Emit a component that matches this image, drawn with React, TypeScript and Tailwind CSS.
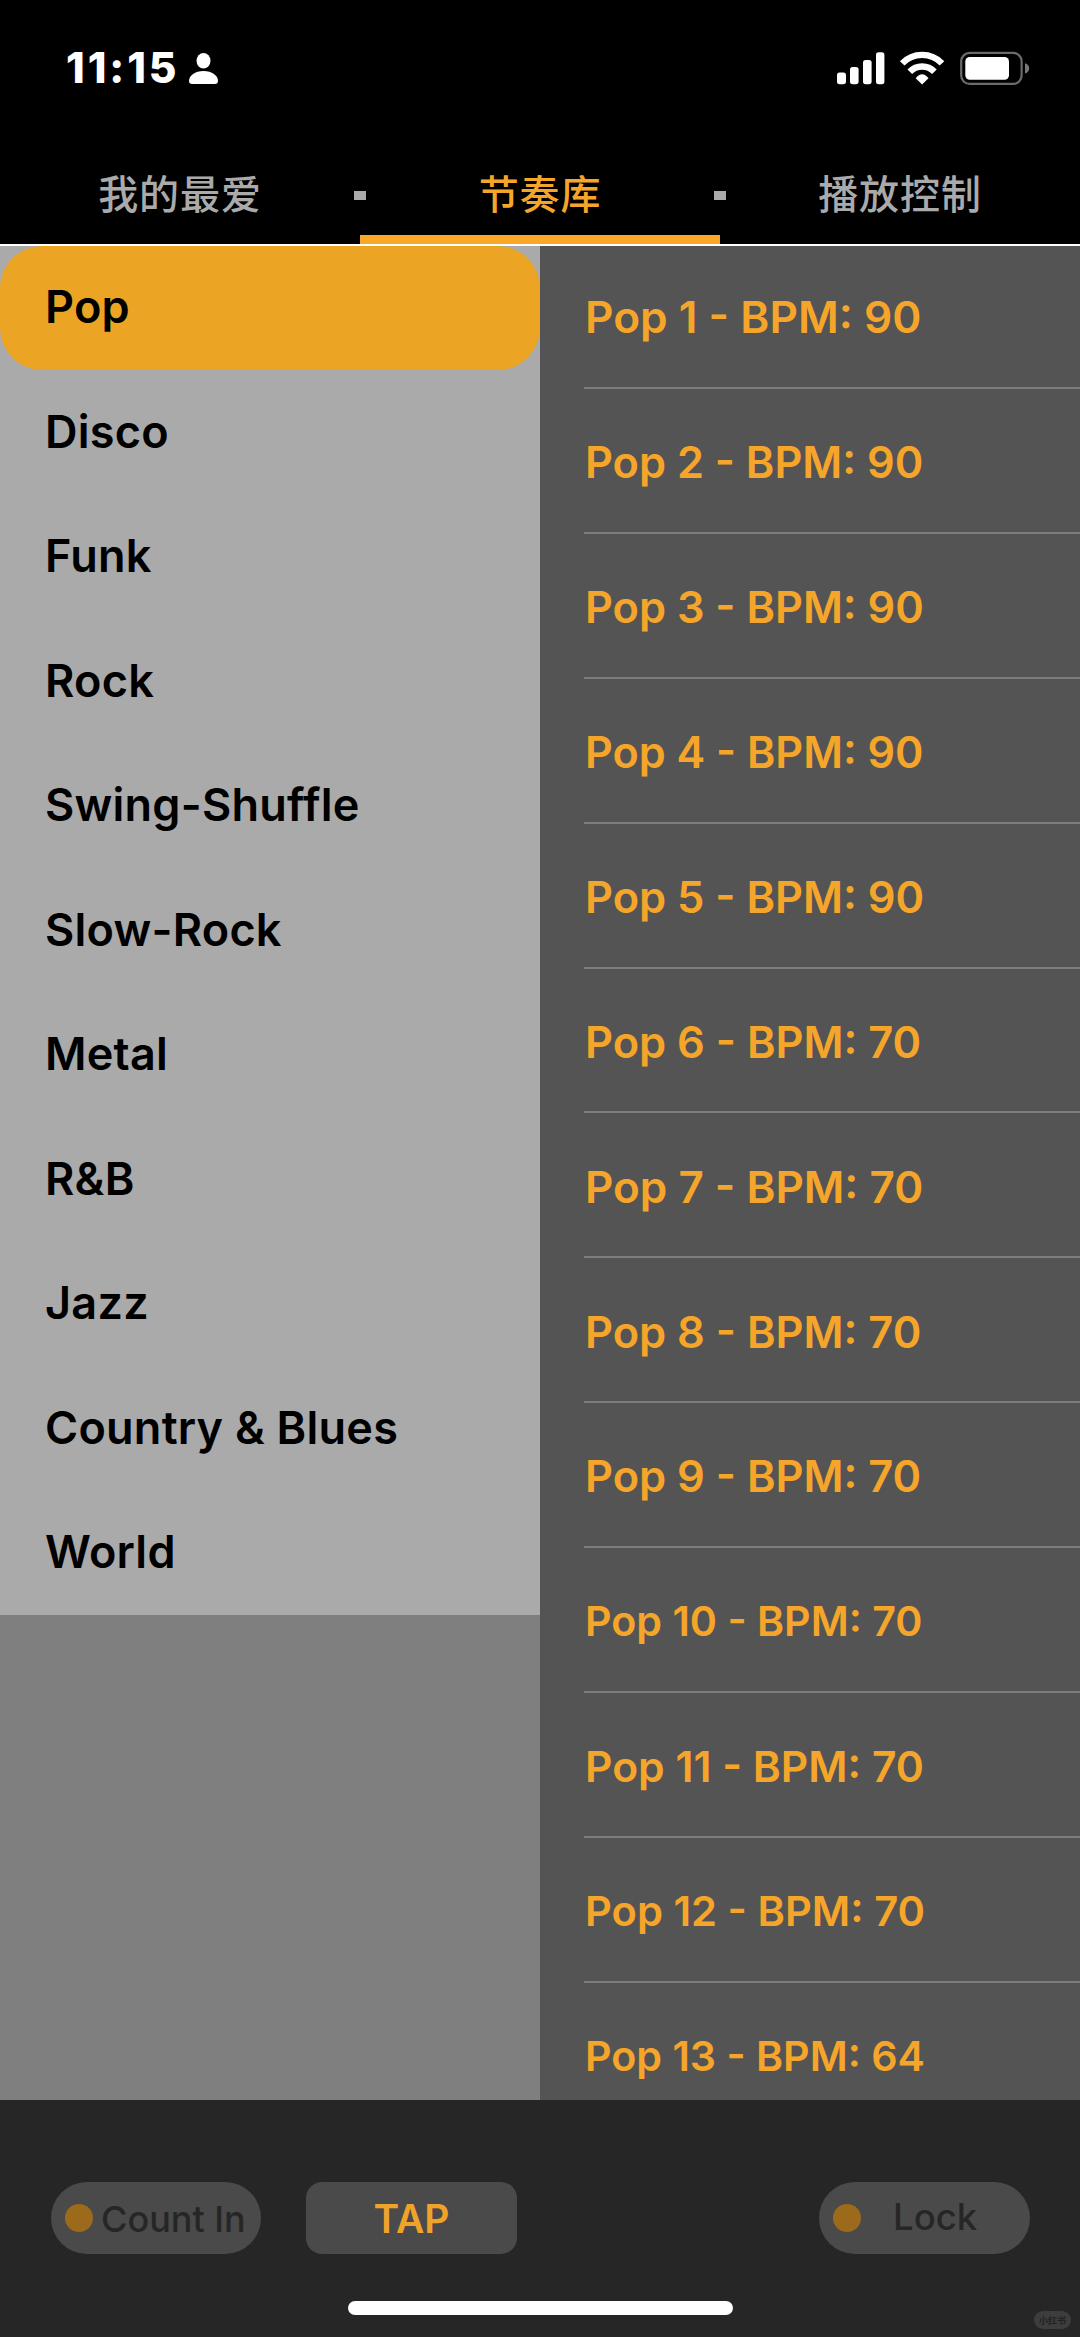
const categories = [
  'Pop',
  'Disco',
  'Funk',
  'Rock',
  'Swing-Shuffle',
  'Slow-Rock',
  'Metal',
  'R&B',
  'Jazz',
  'Country & Blues',
  'World',
]

interface Rhythm {
  name: string
  bpm: number
  size: string
}

// longer labels shrink a little so every row keeps the same width
const rhythms: Rhythm[] = [
  { name: 'Pop 1', bpm: 90, size: 'text-[44.2px]' },
  { name: 'Pop 2', bpm: 90, size: 'text-[43.3px]' },
  { name: 'Pop 3', bpm: 90, size: 'text-[43.3px]' },
  { name: 'Pop 4', bpm: 90, size: 'text-[43.1px]' },
  { name: 'Pop 5', bpm: 90, size: 'text-[43.4px]' },
  { name: 'Pop 6', bpm: 70, size: 'text-[43.4px]' },
  { name: 'Pop 7', bpm: 70, size: 'text-[44px]' },
  { name: 'Pop 8', bpm: 70, size: 'text-[43.4px]' },
  { name: 'Pop 9', bpm: 70, size: 'text-[43.4px]' },
  { name: 'Pop 10', bpm: 70, size: 'text-[41.2px]' },
  { name: 'Pop 11', bpm: 70, size: 'text-[42.6px]' },
  { name: 'Pop 12', bpm: 70, size: 'text-[41.7px]' },
  { name: 'Pop 13', bpm: 64, size: 'text-[41.2px]' },
]

function StatusBar() {
  return (
    <div className="flex h-[138px] shrink-0 justify-between pt-[50px] pr-[50px] pl-[66px] text-white">
      <div className="flex h-[37px] items-center gap-[10px]">
        <span className="text-[42.5px] leading-none font-extrabold tracking-[2.9px]">11:15</span>
        <svg width="29" height="31" viewBox="0 0 29 31" fill="currentColor">
          <ellipse cx="14.5" cy="7.8" rx="7" ry="7.8" />
          <path d="M3.5 31C1 31 0 29.8 0 28C0 22.5 6 18 14.5 18S29 22.5 29 28C29 29.8 28 31 25.5 31Z" />
        </svg>
      </div>
      <svg width="194" height="36" viewBox="836 50 194 36" fill="none">
        <g fill="#fff">
          <rect x="837" y="72.6" width="9" height="11.6" rx="2.6" />
          <rect x="850" y="67" width="8.6" height="17.2" rx="2.6" />
          <rect x="863" y="60" width="8.6" height="24.2" rx="2.6" />
          <rect x="876" y="52.3" width="8.4" height="31.9" rx="2.6" />
        </g>
        <path d="M902.2 63.4A27.5 27.5 0 0 1 942 63.4" stroke="#fff" strokeWidth="6.4" />
        <path d="M909.8 71.8A17 17 0 0 1 934.4 71.8" stroke="#fff" strokeWidth="6.4" />
        <path d="M915.7 78.2Q922.1 70.4 928.5 78.2L922.1 84.4Z" fill="#fff" />
        <rect x="961.2" y="52.9" width="60.4" height="31" rx="8.5" stroke="#6b6b6b" strokeWidth="2.2" />
        <rect x="965.3" y="57" width="43.7" height="22.7" rx="4.5" fill="#fff" />
        <path d="M1025 63.3C1030.6 65 1030.6 72 1025 73.6Z" fill="#777" />
      </svg>
    </div>
  )
}

function Tabs() {
  return (
    <nav className="flex h-[106px] shrink-0 items-stretch text-[40px] leading-none font-medium tracking-[0.9px] text-[#aaaaaa]">
      <div className="relative flex flex-1 justify-center pt-[37px]">
        我的最爱
        <span className="absolute top-[53px] -right-[6px] h-[9px] w-[12px] bg-[#ababab]" />
      </div>
      <div className="flex flex-1 justify-center border-b-9 border-[#f8a726] pt-[37px] text-[#f5a62a]">
        节奏库
      </div>
      <div className="relative flex flex-1 justify-center pt-[37px]">
        播放控制
        <span className="absolute top-[53px] -left-[6px] h-[9px] w-[12px] bg-[#ababab]" />
      </div>
    </nav>
  )
}

function CategoryList() {
  return (
    <ul className="w-[540px] shrink-0 self-start bg-[#aaaaaa] text-[45px] font-semibold tracking-[0.25px] text-black">
      {categories.map((c, i) => (
        <li
          key={c}
          className={`flex items-center pl-[45px] leading-none ${
            i === 0 ? 'h-[123.5px] rounded-[42px] bg-[#eba424] pb-[3px]' : 'h-[124.5px] pb-px'
          }`}
        >
          {c}
        </li>
      ))}
    </ul>
  )
}

function RhythmList() {
  return (
    <ul className="flex-1 overflow-hidden bg-[#545454] pl-[44px] font-semibold text-[#f5a62a]">
      {rhythms.map((r, i) => (
        <li
          key={r.name}
          className={`flex items-center border-b-2 border-[#7d7d7d] pl-px leading-none whitespace-nowrap ${
            i === 0 ? 'h-[143px] pt-[2px]' : 'h-[144.9px] pt-[5px]'
          } ${r.size}`}
        >
          {r.name} - BPM: {r.bpm}
        </li>
      ))}
    </ul>
  )
}

function BottomBar() {
  return (
    <footer className="relative flex h-[237px] shrink-0 items-start bg-[#262626] pt-[82px] pr-[50px] pl-[51px] leading-none font-medium text-[#262626]">
      <button type="button" className="flex h-[72px] w-[210px] items-center rounded-full bg-[#4a4a4a] pl-[14px]">
        <span className="size-7 rounded-full bg-[#9b6b1b]" />
        <span className="pt-px pl-2 text-[36px] leading-none whitespace-nowrap">Count In</span>
      </button>
      <button
        type="button"
        className="ml-[45px] h-[72px] w-[211px] rounded-2xl bg-[#4a4a4a] text-[39px] leading-none font-semibold text-[#f0a32a]"
      >
        TAP
      </button>
      <button type="button" className="ml-auto flex h-[72px] w-[211px] items-center rounded-full bg-[#4a4a4a] pl-[14px]">
        <span className="size-7 rounded-full bg-[#9b6b1b]" />
        <span className="pb-[2px] pl-8 text-[36.5px] leading-none">Lock</span>
      </button>
      <div className="absolute top-[201px] left-[348px] h-[14px] w-[385px] rounded-full bg-white" />
      <div className="absolute top-[211px] left-[1034px] flex h-[18px] w-[37px] items-center justify-center rounded-full bg-[#3d3d3d] text-[9px] font-bold text-[#222]">
        小红书
      </div>
    </footer>
  )
}

export default function App() {
  return (
    <div className="flex h-[2337px] w-[1080px] flex-col overflow-hidden bg-black font-['Inter','Noto_Sans_CJK_SC',sans-serif]">
      <StatusBar />
      <Tabs />
      <main className="flex min-h-0 flex-1 border-t-2 border-white bg-[#7f7f7f]">
        <CategoryList />
        <RhythmList />
      </main>
      <BottomBar />
    </div>
  )
}
